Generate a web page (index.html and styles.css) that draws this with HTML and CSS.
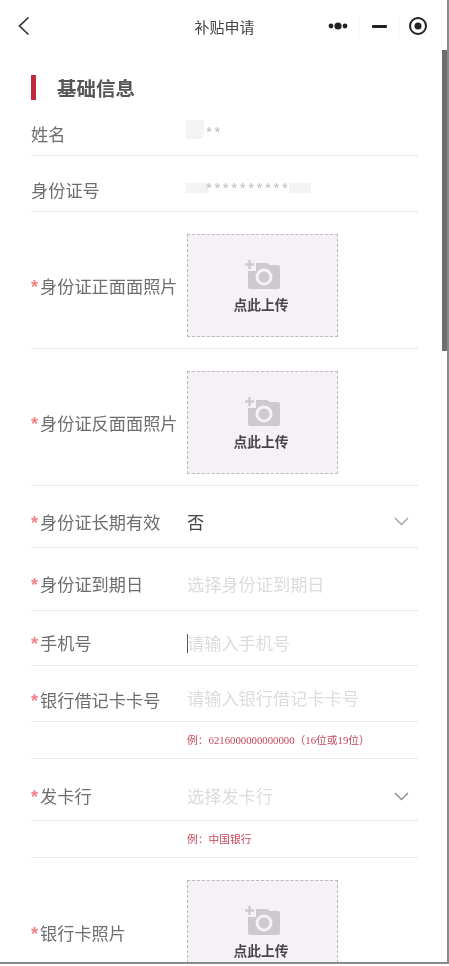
FILE: index.html
```html
<!DOCTYPE html>
<html lang="zh-CN">
<head>
<meta charset="utf-8">
<title>补贴申请</title>
<link rel="stylesheet" href="styles.css">
</head>
<body>
<div class="frame">
  <header class="nav">
    <svg class="back" width="14" height="20" viewBox="0 0 14 20"><path d="M11.5 1.5 2.5 10l9 8.500" fill="none" stroke="#333" stroke-width="1.700"/></svg>
    <h1 class="nav-title">补贴申请</h1>
    <div class="capsule">
      <svg class="cap-icon" width="20" height="8" viewBox="0 0 20 8"><circle cx="3" cy="4" r="2.400" fill="#222"/><circle cx="10" cy="4" r="3.600" fill="#222"/><circle cx="17" cy="4" r="2.400" fill="#222"/></svg>
      <i class="cap-line"></i>
      <i class="cap-dash"></i>
      <i class="cap-line"></i>
      <svg class="cap-icon" width="20" height="20" viewBox="0 0 20 20"><circle cx="10" cy="10" r="8" fill="none" stroke="#222" stroke-width="2"/><circle cx="10" cy="10" r="3.500" fill="#222"/></svg>
    </div>
  </header>
  <main class="content">
    <h2 class="section"><i class="section-bar"></i>基础信息</h2>

    <div class="row row-name">
      <span class="label">姓名</span>
      <span class="masked"><i class="patch patch-name"></i><span class="stars">**</span></span>
    </div>
    <div class="row row-id">
      <span class="label">身份证号</span>
      <span class="masked"><i class="patch patch-id"></i><span class="stars stars-id">**********</span><i class="patch patch-id patch-end"></i></span>
    </div>

    <div class="row row-upload">
      <span class="label"><b class="req">*</b>身份证正面面照片</span>
      <div class="upload">
        <svg class="cam" width="36" height="30" viewBox="0 0 36 30"><path d="M3 8h5l3-4h11l3 2h8a2 2 0 0 1 2 2v20a2 2 0 0 1-2 2H5a2 2 0 0 1-2-2z" fill="#cdc9cf"/><circle cx="19" cy="18" r="8.500" fill="#f6f1f6"/><circle cx="19" cy="18" r="5.500" fill="#cdc9cf"/><path d="M-1 0h12v12H-1z" fill="#f6f1f6"/><path d="M4.500 1v9M0 5.500h9" stroke="#cdc9cf" stroke-width="2.400"/></svg>
        <span class="upload-text">点此上传</span>
      </div>
    </div>
    <div class="row row-upload">
      <span class="label"><b class="req">*</b>身份证反面面照片</span>
      <div class="upload">
        <svg class="cam" width="36" height="30" viewBox="0 0 36 30"><path d="M3 8h5l3-4h11l3 2h8a2 2 0 0 1 2 2v20a2 2 0 0 1-2 2H5a2 2 0 0 1-2-2z" fill="#cdc9cf"/><circle cx="19" cy="18" r="8.500" fill="#f6f1f6"/><circle cx="19" cy="18" r="5.500" fill="#cdc9cf"/><path d="M-1 0h12v12H-1z" fill="#f6f1f6"/><path d="M4.500 1v9M0 5.500h9" stroke="#cdc9cf" stroke-width="2.400"/></svg>
        <span class="upload-text">点此上传</span>
      </div>
    </div>

    <div class="row row-62">
      <span class="label"><b class="req">*</b>身份证长期有效</span>
      <span class="value">否</span>
      <svg class="chev" width="15" height="9" viewBox="0 0 15 9"><path d="M1 1l6.500 6.500L14 1" fill="none" stroke="#a3a3a3" stroke-width="1.400"/></svg>
    </div>
    <div class="row row-63">
      <span class="label"><b class="req">*</b>身份证到期日</span>
      <span class="ph">选择身份证到期日</span>
    </div>
    <div class="row row-55">
      <span class="label"><b class="req">*</b>手机号</span>
      <i class="caret"></i><span class="ph">请输入手机号</span>
    </div>
    <div class="row row-56">
      <span class="label"><b class="req">*</b>银行借记卡卡号</span>
      <span class="ph">请输入银行借记卡卡号</span>
    </div>
    <div class="row row-hint"><span class="hint">例：6216000000000000（16位或19位）</span></div>
    <div class="row row-card">
      <span class="label"><b class="req">*</b>发卡行</span>
      <span class="ph">选择发卡行</span>
      <svg class="chev" width="15" height="9" viewBox="0 0 15 9"><path d="M1 1l6.500 6.500L14 1" fill="none" stroke="#8a8a8a" stroke-width="1.400"/></svg>
    </div>
    <div class="row row-hint"><span class="hint">例：中国银行</span></div>

    <div class="row row-upload row-photo">
      <span class="label"><b class="req">*</b>银行卡照片</span>
      <div class="upload">
        <svg class="cam" width="36" height="30" viewBox="0 0 36 30"><path d="M3 8h5l3-4h11l3 2h8a2 2 0 0 1 2 2v20a2 2 0 0 1-2 2H5a2 2 0 0 1-2-2z" fill="#cdc9cf"/><circle cx="19" cy="18" r="8.500" fill="#f6f1f6"/><circle cx="19" cy="18" r="5.500" fill="#cdc9cf"/><path d="M-1 0h12v12H-1z" fill="#f6f1f6"/><path d="M4.500 1v9M0 5.500h9" stroke="#cdc9cf" stroke-width="2.400"/></svg>
        <span class="upload-text">点此上传</span>
      </div>
    </div>
  </main>
  <i class="scrollbar"></i>
</div>
</body>
</html>
```
FILE: styles.css
```css
* { box-sizing: border-box; }
html, body { margin: 0; height: 966px; overflow: hidden; background: #fff; }
body { font-family: "Noto Sans CJK SC", "Liberation Sans", sans-serif; }
i, b { font-style: normal; }

.frame {
  position: relative;
  width: 449px;
  height: 964px;
  overflow: hidden;
  background: #fff;
  border-right: 2px solid #8a8a8a;
  border-bottom: 2px solid #8a8a8a;
  filter: blur(0.4px);
}

.nav {
  position: relative;
  display: flex;
  align-items: center;
  justify-content: center;
  height: 50px;
  padding: 3px 0 0 2px;
}
.back { position: absolute; left: 17px; top: 16px; }
.nav-title { margin: 0; font-size: 15px; font-weight: 400; color: #444; line-height: 20px; }
.capsule {
  position: absolute;
  left: 328px;
  top: 16px;
  width: 100px;
  height: 20px;
  display: flex;
  align-items: center;
}
.cap-icon { flex: none; }
.cap-line { flex: none; width: 1px; height: 20px; background: #f7f7f7; margin: 0 12px 0 11px; }
.cap-dash { flex: none; width: 15px; height: 3px; background: #222; border-radius: 1px; }
.capsule .cap-dash + .cap-line { margin: 0 8px 0 12px; }

.content { width: 418px; padding: 25px 0 0 31px; }
.section {
  display: flex;
  align-items: center;
  height: 25px;
  margin: 0 0 12px;
  font-size: 19.500px;
  font-weight: 700;
  color: #555;
  line-height: 25px;
}
.section-bar { width: 5px; height: 25px; background: #c22a3c; margin-right: 21px; }

.row {
  position: relative;
  display: flex;
  align-items: center;
  border-bottom: 1px solid #e8e8e8;
  font-size: 17.200px;
  line-height: 22px;
}
.row-name { height: 44px; }
.row-id { height: 56px; padding-top: 12px; }
.row-upload { height: 137px; padding: 22px 0 11px; }
.row-62 { height: 62px; padding-top: 10px; }
.row-63 { height: 63px; padding-top: 10px; }
.row-55 { height: 55px; padding-top: 10px; }
.row-56 { height: 56px; padding-top: 12px; }
.row-card { height: 62px; padding-top: 13px; }
.row-hint { height: 37px; padding-left: 156px; }
.row-photo .label { margin-top: 3px; }
.row-56 .ph { margin-bottom: 3px; }

.label { flex: none; width: 156px; color: #6e6e6e; white-space: nowrap; }
.req { display: inline-block; width: 9px; color: #f58088; font-weight: 700; font-size: 18px; line-height: 18px; font-family: "Liberation Sans", sans-serif; }
.value { color: #444; flex: 1; }
.ph { color: #dcdcdc; flex: 1; white-space: nowrap; }
.row-55 .ph { margin-left: -1px; }
.caret { flex: none; width: 1px; height: 19px; background: #555; }
.chev { flex: none; margin: 0 9px 0 0; }
.hint { font-family: "Liberation Serif", "Noto Sans CJK SC", serif; font-size: 10.750px; line-height: 16px; color: #c4465a; white-space: nowrap; }

.masked { display: flex; align-items: flex-start; margin-left: -1px; height: 22px; }
.row-name .masked { margin-top: 2px; }
.patch { flex: none; background: #f3f3f3; }
.patch-name { width: 18px; height: 19px; margin-top: -4px; border-radius: 0 0 6px 2px; }
.patch-id { width: 22px; height: 10px; margin-top: 4px; }
.patch-end { margin-left: -1px; }
.stars { margin-left: 2px; margin-top: 0; font-family: "Liberation Sans", sans-serif; font-size: 15px; line-height: 16px; color: #b8b8b8; letter-spacing: 2.600px; }
.stars-id { margin-left: -2px; margin-top: 1px; }

.upload {
  flex: none;
  width: 151px;
  height: 103px;
  display: flex;
  flex-direction: column;
  align-items: center;
  background: #f6f1f6;
  border: 1px dashed #bdbabd;
  padding: 24px 3px 0 0;
}
.cam { display: block; margin-left: 3px; overflow: hidden; }
.upload-text { margin-top: 5px; font-size: 13.750px; line-height: 20px; font-weight: 700; color: #4a4548; }

.scrollbar { position: absolute; left: 442px; top: 50px; width: 5px; height: 301px; background: #6e6e6e; }
```
